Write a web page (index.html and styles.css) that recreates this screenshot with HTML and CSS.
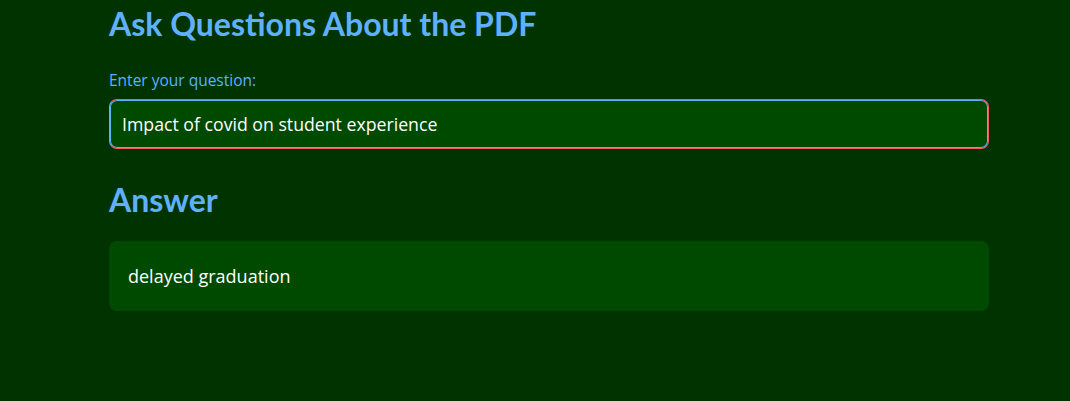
FILE: index.html
```html
<!DOCTYPE html>
<html>
<head>
<meta charset="utf-8">
<link rel="stylesheet" href="styles.css">
</head>
<body>
<main class="main">
  <h2 class="title">Ask Questions About the PDF</h2>
  <label class="label" for="q">Enter your question:</label>
  <div class="input-wrap">
    <input id="q" class="input" type="text" value="Impact of covid on student experience">
  </div>
  <h2 class="answer-title">Answer</h2>
  <div class="answer-box">delayed graduation</div>
</main>
</body>
</html>
```

FILE: styles.css
```css
* { box-sizing: border-box; }
html, body {
  margin: 0;
  height: 100%;
  background: #003300;
  font-family: "Lato", "Open Sans", sans-serif;
}
.main {
  width: 880px;
  margin-left: 109px;
  padding-top: 4px;
  display: flex;
  flex-direction: column;
}
.title {
  margin: 0;
  font-size: 32px;
  font-weight: 700;
  color: #5fb0ff;
  line-height: 40px;
}
.label {
  margin-top: 27px;
  font-family: "Open Sans", sans-serif;
  font-size: 15.5px;
  color: #5fb0ff;
  line-height: 18px;
}
.input-wrap {
  margin-top: 10px;
  height: 50px;
  border-radius: 8px;
  border: 1px solid #ff5a5a;
  border-left-color: #5fb0ff;
  box-shadow: inset 0 0 0 1px #5fb0ff;
  background: #004a00;
  padding: 2px;
}
.input {
  width: 100%;
  height: 100%;
  border: none;
  outline: none;
  background: transparent;
  color: #ffffff;
  font-family: "Open Sans", sans-serif;
  font-size: 17.7px;
  padding: 0 10px;
}
.answer-title {
  margin: 31px 0 0;
  font-size: 32px;
  font-weight: 700;
  color: #5fb0ff;
  line-height: 40px;
}
.answer-box {
  margin-top: 21px;
  height: 70px;
  border-radius: 8px;
  background: #004a00;
  color: #ffffff;
  font-family: "Open Sans", sans-serif;
  font-size: 18px;
  padding: 0 19px;
  display: flex;
  align-items: center;
}
```
